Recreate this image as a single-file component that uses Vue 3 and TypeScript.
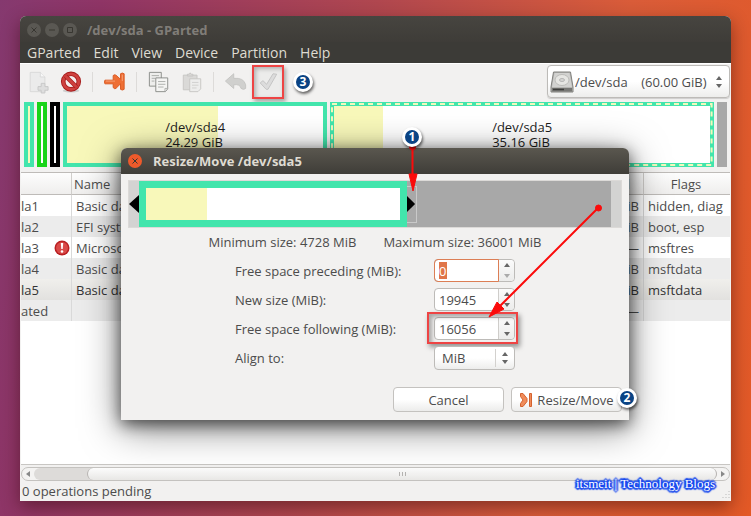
<script setup lang="ts">
import { ref } from 'vue'

interface PartitionRow {
  name: string
  label: string
  size: string
  flags: string
  warning?: boolean
  selected?: boolean
  shaded?: boolean
}

const menus: string[] = ['GParted', 'Edit', 'View', 'Device', 'Partition', 'Help']

const rows: PartitionRow[] = [
  { name: 'la1', label: 'Basic data', size: 'iB', flags: 'hidden, diag' },
  { name: 'la2', label: 'EFI system', size: 'iB', flags: 'boot, esp', shaded: true },
  { name: 'la3', label: 'Microsoft', size: '—', flags: 'msftres', warning: true },
  { name: 'la4', label: 'Basic data', size: 'iB', flags: 'msftdata', shaded: true },
  { name: 'la5', label: 'Basic data', size: 'iB', flags: 'msftdata', selected: true },
  { name: 'ated', label: '', size: '—', flags: '', shaded: true },
]

const preceding = ref('0')
const newSize = ref('19945')
const following = ref('16056')
</script>

<template>
  <div class="desktop">
    <main class="window">
      <header class="titlebar">
        <button class="winbtn" aria-label="Close">
          <svg viewBox="0 0 14 14"><path d="M4.5 4.5l5 5M9.5 4.5l-5 5" /></svg>
        </button>
        <button class="winbtn" aria-label="Minimize">
          <svg viewBox="0 0 14 14"><path d="M4 7h6" /></svg>
        </button>
        <button class="winbtn" aria-label="Maximize">
          <svg viewBox="0 0 14 14"><path d="M4.5 4.5h5v5h-5z" /></svg>
        </button>
        <h1>/dev/sda - GParted</h1>
      </header>
      <nav class="menubar">
        <button v-for="m in menus" :key="m">{{ m }}</button>
      </nav>

      <div class="toolbar">
        <button class="tool" aria-label="New">
          <svg viewBox="0 0 24 24" fill="#ebebeb" stroke="#d8d8d8">
            <path d="M3.5 1.5h11l5 5v16h-16z" />
            <path d="M14.5 1.5v5h5" fill="#f8f8f8" />
            <path d="M15.5 13.5h4v3.5h3.5v4h-3.5v3h-4v-3h-3.500v-4h3.500z" fill="#dedede" stroke="#c6c6c6" />
          </svg>
        </button>
        <button class="tool" aria-label="Delete">
          <svg viewBox="0 0 24 24" fill="none">
            <ellipse cx="12" cy="21.5" rx="9" ry="2" fill="#cfcfcf" />
            <circle cx="12" cy="11.5" r="8.5" fill="#f5eeee" stroke="#a61d1d" stroke-width="5" />
            <circle cx="12" cy="11.5" r="8.5" stroke="#cf413f" stroke-width="3" />
            <path d="M6 5.5l12 12" stroke="#a61d1d" stroke-width="4.500" />
            <path d="M6 5.5l12 12" stroke="#cf413f" stroke-width="3" />
          </svg>
        </button>
        <span class="sep"></span>
        <button class="tool" aria-label="Resize/Move">
          <svg viewBox="0 0 24 24" stroke="#d9571f" stroke-linejoin="round">
            <path d="M1 10q-1 2 0 4h9v4q1.500 2 3 1l5-5v6q2 1.500 4 0v-17q-2-1.500-4 0v6l-5-4.500q-2-1-3 .5v5z" fill="#ee6f35" />
            <path d="M2 11h10M20 4v7" stroke="#f6a27a" fill="none" />
          </svg>
        </button>
        <span class="sep"></span>
        <button class="tool" aria-label="Copy">
          <svg viewBox="0 0 24 24" fill="#eeeeec" stroke="#888a85">
            <path d="M1.500 1.500h13v15h-13z" />
            <path d="M4 5h8M4 8h4M4 11h3" stroke="#aaaca8" />
            <path d="M8.500 7.500h13v12l-2.500 3h-10.500z" fill="#f5f5f3" />
            <path d="M11 11.500h8M11 14.500h8M11 17.500h6M18.500 22v-3h3" stroke="#aaaca8" fill="none" />
          </svg>
        </button>
        <button class="tool" aria-label="Paste">
          <svg viewBox="0 0 24 24" fill="#dad9d7" stroke="#c6c5c3">
            <path d="M2.500 4.500h15v16h-15z" />
            <path d="M7 5.500v-2h2q1-3 2 0h2v2z" />
            <path d="M9.500 8.500h12v11l-3 3h-9z" fill="#ededec" />
            <path d="M12 12.500h7M12 15.500h7M12 18.500h5" stroke="#cfcfce" />
          </svg>
        </button>
        <span class="sep"></span>
        <button class="tool" aria-label="Undo">
          <svg viewBox="0 0 24 24" fill="#d0d0ce" stroke="#c4c4c2" stroke-linejoin="round">
            <path d="M.5 11l9-8v5q11-1 13 7v4q-2 2-5 0-1-5-8-4v4z" />
          </svg>
        </button>
        <button class="tool apply" aria-label="Apply">
          <svg viewBox="0 0 24 24" fill="#dcdcdc" stroke="#c2c2c2" stroke-linejoin="round">
            <path d="M3.500 13l3-2.500 4 4 7-11.500 4 .500-9.500 16.500h-2z" />
          </svg>
        </button>
        <span class="badge">3</span>
        <div class="device">
          <svg class="disk" viewBox="0 0 24 24">
            <path d="M3.500 2h17L23 17v5H1v-5z" fill="#b5b5b2" stroke="#80807d" />
            <path d="M4.500 3h15l2.500 14H2z" fill="#d2d2d0" />
            <ellipse cx="12" cy="10" rx="7" ry="5.500" fill="#e6e6e3" stroke="#bcbcb9" />
            <ellipse cx="12" cy="10" rx="2.500" ry="1.500" fill="#d6d6d3" stroke="#b5b5b5" />
            <path d="M2 18h20v3.500H2z" fill="#777774" />
            <path d="M3 19.500h11" stroke="#3d3d3b" stroke-width="1.500" />
          </svg>
          <select aria-label="Device">
            <option>/dev/sda&nbsp;&nbsp;&nbsp; (60.00 GiB)</option>
          </select>
          <svg class="updown" viewBox="0 0 8 14"><path d="M1 5l3-4 3 4zM1 9l3 4 3-4z" /></svg>
        </div>
      </div>

      <section class="graph">
        <div class="part tiny teal"></div>
        <div class="part tiny green"></div>
        <div class="part tiny black"></div>
        <div class="part sda4"><p>/dev/sda4<br />24.29 GiB</p></div>
        <div class="part sda5">
          <svg><rect /></svg>
          <p>/dev/sda5<br />35.16 GiB</p>
        </div>
        <div class="part rest"></div>
      </section>

      <section class="list">
        <table>
          <colgroup>
            <col class="c-part" /><col class="c-name" /><col /><col class="c-flags" />
          </colgroup>
          <thead>
            <tr><th></th><th class="left">Name</th><th class="right">d</th><th>Flags</th></tr>
          </thead>
          <tbody>
            <tr v-for="r in rows" :key="r.name" :class="{ shaded: r.shaded, selected: r.selected }">
              <td class="first">
                <div>
                  {{ r.name }}
                  <svg v-if="r.warning" viewBox="0 0 16 16">
                    <circle cx="8" cy="8" r="7.500" fill="#b91f22" />
                    <circle cx="8" cy="8" r="6" fill="#d94a48" />
                    <path d="M6.800 3h2.400l-.5 6H7.300z" fill="#fff" />
                    <circle cx="8" cy="11.500" r="1.300" fill="#fff" />
                  </svg>
                </div>
              </td>
              <td>{{ r.label }}</td>
              <td class="right">{{ r.size }}</td>
              <td>{{ r.flags }}</td>
            </tr>
          </tbody>
        </table>
      </section>

      <div class="scroll">
        <button aria-label="Scroll left"><svg viewBox="0 0 6 6"><path d="M5 0v6L1 3z" /></svg></button>
        <div class="rail"><div class="thumb"><i></i><i></i><i></i></div></div>
        <button aria-label="Scroll right"><svg viewBox="0 0 6 6"><path d="M1 0v6l4-3z" /></svg></button>
      </div>
      <footer class="status">
        <span>0 operations pending</span>
        <span class="watermark">itsmeit | Technology Blogs</span>
        <svg class="resize-corner" viewBox="0 0 10 10"><path d="M9 1v8M6 4v5M3 7v2" /></svg>
      </footer>

      <div class="dialog" role="dialog" aria-labelledby="dlg-title">
        <header>
          <button class="winbtn close" aria-label="Close dialog">
            <svg viewBox="0 0 14 14"><path d="M4.500 4.500l5 5M9.500 4.500l-5 5" /></svg>
          </button>
          <h2 id="dlg-title">Resize/Move /dev/sda5</h2>
        </header>
        <div class="body">
          <div class="resizer">
            <div class="edge"><svg viewBox="0 0 10 18"><path d="M10 0v18L0 9z" /></svg></div>
            <div class="block"></div>
            <div class="free">
              <div class="grip"><svg viewBox="0 0 10 18"><path d="M0 0v18l9-9z" /></svg></div>
            </div>
            <div class="edge"></div>
          </div>
          <div class="limits">
            <span>Minimum size: 4728 MiB</span><span>Maximum size: 36001 MiB</span>
          </div>
          <div class="form">
            <label for="pre">Free space preceding (MiB):</label>
            <div class="spin focus">
              <div class="entry"><input id="pre" v-model="preceding" class="marked" /></div>
              <div class="steps">
                <button aria-label="Increase preceding"><svg viewBox="0 0 6 4"><path d="M0 4l3-4 3 4z" /></svg></button>
                <button aria-label="Decrease preceding" class="off"><svg viewBox="0 0 6 4"><path d="M0 0l3 4 3-4z" /></svg></button>
              </div>
            </div>
            <label for="size">New size (MiB):</label>
            <div class="spin">
              <div class="entry"><input id="size" v-model="newSize" /></div>
              <div class="steps">
                <button aria-label="Increase size"><svg viewBox="0 0 6 4"><path d="M0 4l3-4 3 4z" /></svg></button>
                <button aria-label="Decrease size"><svg viewBox="0 0 6 4"><path d="M0 0l3 4 3-4z" /></svg></button>
              </div>
            </div>
            <label for="post">Free space following (MiB):</label>
            <div class="spin outlined">
              <div class="entry"><input id="post" v-model="following" /></div>
              <div class="steps">
                <button aria-label="Increase following"><svg viewBox="0 0 6 4"><path d="M0 4l3-4 3 4z" /></svg></button>
                <button aria-label="Decrease following"><svg viewBox="0 0 6 4"><path d="M0 0l3 4 3-4z" /></svg></button>
              </div>
            </div>
            <label for="align">Align to:</label>
            <div class="align">
              <select id="align"><option>MiB</option></select>
              <svg class="updown" viewBox="0 0 8 14"><path d="M1 5l3-4 3 4zM1 9l3 4 3-4z" /></svg>
            </div>
          </div>
          <div class="actions">
            <button class="btn">Cancel</button>
            <button class="btn">
              <svg viewBox="0 0 14 16" stroke="#d4622f" fill="#f08c5a">
                <path d="M1.500 1.500h2.500l4 5v3l-4 5h-2.500v-3l2.500-3.500-2.500-3.500z" />
                <path d="M10.500 1.500h2v13h-2z" />
              </svg>
              Resize/Move
              <span class="badge on-button">2</span>
            </button>
          </div>
        </div>
        <svg class="arrows">
          <path d="M291.500 -1V30M477 60L378 159" />
          <circle cx="291.500" cy="-1" r="3" />
          <circle cx="477.500" cy="60" r="3" />
          <path class="head" d="M288 26h8l-4 17zM368 169l8 -15 7 7z" />
        </svg>
        <span class="badge on-title">1</span>
      </div>
    </main>
  </div>
</template>

<style>
body {
  margin: 0;
}
</style>

<style scoped>
* {
  box-sizing: border-box;
}
.desktop {
  min-height: 100vh;
  padding: 16px 20px 15px;
  display: flex;
  font: 13px/16px "Open Sans", "Noto Sans", sans-serif;
  color: #4c4c4c;
  background: linear-gradient(100deg, #85396f 0%, #8f3566 12%, #b0474f 45%, #d95c39 75%, #e35926 100%);
}
button,
select,
input {
  font: inherit;
  color: inherit;
  margin: 0;
  padding: 0;
  border: 0;
  background: none;
}
svg {
  display: block;
}
h1,
h2,
p {
  margin: 0;
  font-size: 13px;
}
.window {
  position: relative;
  flex: 1;
  min-width: 0;
  display: flex;
  flex-direction: column;
  background: #f2f1f0;
  border-radius: 6px 6px 0 0;
  box-shadow: 0 6px 18px rgba(40, 0, 0, 0.45);
}
.titlebar {
  height: 26px;
  padding: 2px 7px 0;
  display: flex;
  align-items: center;
  gap: 4px;
  background: linear-gradient(#474540, #3e3c38);
  border-radius: 6px 6px 0 0;
  color: #807d78;
}
.titlebar h1 {
  margin-left: 6px;
}
.winbtn {
  width: 14px;
  height: 14px;
  border-radius: 50%;
  background: #5a5853;
}
.winbtn svg {
  width: 14px;
  height: 14px;
  fill: none;
  stroke: #383631;
}
.menubar {
  height: 21px;
  padding: 0 7px;
  display: flex;
  align-items: center;
  gap: 13px;
  background: #3c3b37;
  color: #dfdbd2;
  font-size: 14px;
}
.toolbar {
  height: 36px;
  padding: 1px 1px 1px 6px;
  display: flex;
  align-items: center;
  border-top: 1px solid #fff;
}
.tool {
  width: 33px;
  height: 34px;
  display: flex;
  flex: none;
  align-items: center;
  padding-left: 1px;
}
.tool svg {
  width: 22px;
  height: 24px;
}
.sep {
  width: 1px;
  height: 20px;
  margin-right: 10px;
  background: #dddbd9;
}
.toolbar .apply {
  width: 32px;
  justify-content: center;
  margin-left: -5px;
  padding: 0;
  border: 2px solid #ee4444;
  background: #ececeb;
  box-shadow: 2px 3px 4px rgba(0, 0, 0, 0.3), inset 2px 2px 4px rgba(0, 0, 0, 0.25);
}
.badge {
  width: 20px;
  height: 20px;
  margin-left: 9px;
  flex: none;
  border: 3px solid #fff;
  border-radius: 50%;
  background: #0a4384;
  color: #fff;
  font-weight: 700;
  font-size: 12px;
  line-height: 14px;
  text-align: center;
  box-shadow: 1px 2px 3px rgba(0, 0, 0, 0.6);
}
.device,
.align {
  position: relative;
  display: flex;
  align-items: center;
  background: linear-gradient(#fff 50%, #ededec);
  border: 1px solid #bdbbb8;
  border-radius: 4px;
}
.device {
  width: 183px;
  height: 33px;
  margin-left: auto;
  box-shadow: 0 1px 1px rgba(0, 0, 0, 0.15);
}
.device select {
  flex: 1;
  min-width: 0;
  appearance: none;
}
.disk {
  width: 24px;
  height: 24px;
  margin: 0 1px 0 2px;
}
.updown {
  width: 8px;
  height: 14px;
  fill: #666;
  margin-right: 6px;
}
.graph {
  display: grid;
  grid-template-columns: 10px 10px 10px 264fr 383fr 10px;
  height: 65px;
  margin: 3px 4px 5px;
  gap: 3px;
  color: #1c1c1c;
}
.part {
  min-width: 0;
  border: 4px solid #42e5ac;
  background: #fff;
  display: flex;
  align-items: center;
  justify-content: center;
  line-height: 15px;
}
.part p {
  padding-top: 1px;
}
.tiny {
  background: #f8f8ba;
}
.green {
  border-color: #19d419;
  background: #fff;
}
.black {
  border-color: #000;
  background: #fff;
}
.sda4 {
  background: linear-gradient(90deg, #f8f8ba 59%, #fff 59%);
}
.sda5 {
  position: relative;
  background: linear-gradient(90deg, #f8f8ba 13%, #fff 13%);
}
.sda5 svg {
  position: absolute;
  inset: -4px;
  width: calc(100% + 8px);
  height: calc(100% + 8px);
}
.sda5 rect {
  x: 2px;
  y: 2px;
  width: calc(100% - 4px);
  height: calc(100% - 4px);
  fill: none;
  stroke: #f3f8bd;
  stroke-width: 2px;
  stroke-dasharray: 5 4;
}
.rest {
  border-color: #a8a8a8;
  background: #a8a8a8;
}
.list {
  flex: 1;
  margin: 0 1px;
  background: #fff;
  border-top: 1px solid #bebbb8;
  border-bottom: 1px solid #c8c6c3;
}
table {
  width: 100%;
  table-layout: fixed;
  border-collapse: separate;
  border-spacing: 0;
}
.c-part {
  width: 51px;
}
.c-name {
  width: 300px;
}
.c-flags {
  width: 86px;
}
th {
  height: 22px;
  padding: 0 4px 0 2px;
  font-weight: 400;
  border-right: 1px solid #d0cecb;
  border-bottom: 1px solid #bebbb8;
  background: linear-gradient(#fdfdfd, #efeeed);
}
td {
  height: 21px;
  padding: 0 4px;
  border-right: 1px solid #d9d9d9;
  white-space: nowrap;
}
th:last-child,
td:last-child {
  border-right: 0;
}
th.left {
  text-align: left;
}
th.right {
  text-align: right;
  padding-right: 13px;
}
td.right {
  text-align: right;
}
td.first {
  padding: 0 1px 0 0;
}
.first div {
  display: flex;
  justify-content: space-between;
  align-items: center;
}
.first svg {
  width: 16px;
  height: 16px;
}
.shaded td {
  background: #ececec;
}
.selected td {
  background: linear-gradient(#f0efec, #e2e1df);
  color: #333;
}
.scroll {
  display: flex;
  height: 14px;
  margin: 2px 1px 0;
  border: 1px solid #c4c2bf;
  border-radius: 7px;
  background: #f4f3f2;
}
.scroll > button {
  width: 12px;
  display: flex;
  align-items: center;
  justify-content: center;
}
.scroll svg {
  width: 6px;
  height: 6px;
  fill: #888;
}
.rail {
  flex: 1;
  background: #dddbd9;
  border-radius: 6px;
  padding-left: 53px;
}
.thumb {
  height: 12px;
  display: flex;
  align-items: center;
  justify-content: center;
  gap: 2px;
  border: solid #b8b5b2;
  border-width: 0 1px;
  border-radius: 6px;
  background: linear-gradient(#fcfcfc, #e8e7e5);
}
.thumb i {
  width: 1px;
  height: 4px;
  background: #b4b2b0;
}
.status {
  display: flex;
  align-items: center;
  height: 20px;
  padding: 0 1px 1px 2px;
}
.watermark {
  font: 13px/14px "Liberation Serif", serif;
  color: #fff;
  margin-left: auto;
  padding-bottom: 14px;
  text-shadow: 0 0 2px #1748ee, 2px 0 1px #1748ee, -2px 0 1px #1748ee, 0 2px 1px #1748ee, 0 -2px 1px #1748ee,
    1px 1px 1px #1748ee, -1px -1px 1px #1748ee, 1px -1px 1px #1748ee, -1px 1px 1px #1748ee, 0 0 3px #1748ee;
}
.resize-corner {
  width: 10px;
  height: 10px;
  margin: 8px 0 0 5px;
  fill: none;
  stroke: #bbb;
  stroke-dasharray: 1 2;
}
.dialog {
  position: absolute;
  top: 132px;
  left: 101px;
  right: 102px;
  border-radius: 6px 6px 0 0;
  background: #f2f1f0;
  box-shadow: 0 8px 38px rgba(0, 0, 0, 0.5), 0 4px 16px rgba(0, 0, 0, 0.6);
}
.dialog header {
  height: 26px;
  padding: 0 7px;
  display: flex;
  align-items: center;
  gap: 11px;
  border-radius: 6px 6px 0 0;
  background: linear-gradient(#5a574f, #3f3d38);
  color: #dfdbd2;
}
.close {
  background: #ee5a2b;
}
.body {
  padding: 6px 7px 8px;
}
.resizer {
  display: grid;
  grid-template-columns: 10px 268fr 204fr 10px;
  height: 48px;
  border: 1px solid #dcdad8;
}
.resizer .edge {
  display: flex;
  align-items: center;
  background: #d3d3d2;
}
.resizer svg {
  width: 10px;
  height: 18px;
}
.block {
  border: 7px solid #42e5ac;
  background: linear-gradient(90deg, #f8f8ba 24%, #fff 24%);
}
.free {
  display: flex;
  align-items: center;
  background: #a8a8a8;
}
.grip {
  width: 10px;
  height: 37px;
  display: flex;
  align-items: center;
  border: 1px solid #c9c9c9;
  border-left: 0;
}
.limits {
  display: flex;
  justify-content: center;
  gap: 27px;
  padding: 6px 0 9px;
}
.form {
  display: grid;
  grid-template-columns: 199px 81px;
  row-gap: 6px;
  align-items: center;
  padding-left: 107px;
}
.spin {
  position: relative;
  display: flex;
  height: 23px;
  border: 1px solid #bdbbb8;
  border-radius: 4px;
  background: #fff;
}
.entry {
  flex: 1;
  min-width: 0;
  padding: 2px 4px;
  border-right: 1px solid #cfcdca;
}
.entry input {
  width: 100%;
  height: 17px;
  display: block;
}
.entry input.marked {
  width: 8px;
  background: #e0764a;
  color: #fff;
}
.focus .entry {
  margin: -1px 0 -1px -1px;
  padding: 2px 4px;
  border: 1px solid #dc7e55;
  border-radius: 4px 0 0 4px;
}
.steps {
  width: 15px;
  display: flex;
  flex-direction: column;
  background: linear-gradient(#fbfbfb, #ececeb);
  border-radius: 0 4px 4px 0;
}
.steps button {
  flex: 1;
  display: flex;
  align-items: center;
  justify-content: center;
}
.steps svg {
  width: 6px;
  height: 4px;
  fill: #666;
}
.steps .off svg {
  fill: #aaa;
}
.outlined::after {
  content: "";
  position: absolute;
  inset: -6px -4px -5px -8px;
  border: 2px solid #ee4444;
  box-shadow: 2px 3px 5px rgba(0, 0, 0, 0.4), inset 3px 3px 4px rgba(0, 0, 0, 0.3);
  pointer-events: none;
}
.align {
  height: 24px;
}
.align select {
  flex: 1;
  min-width: 0;
  height: 18px;
  padding-left: 7px;
  margin-right: 5px;
  appearance: none;
  border-right: 1px solid #d3d1ce;
}
.align .updown {
  margin-right: 5px;
}
.actions {
  display: flex;
  justify-content: flex-end;
  gap: 7px;
  padding: 17px 0 0;
}
.btn {
  position: relative;
  width: 111px;
  height: 25px;
  display: flex;
  align-items: center;
  justify-content: center;
  gap: 4px;
  border: 1px solid #c4c2bf;
  border-radius: 4px;
  background: linear-gradient(#fff 50%, #ececeb);
}
.btn svg {
  width: 14px;
  height: 16px;
  flex: none;
}
.badge.on-button {
  position: absolute;
  right: -16px;
  top: 0;
}
.badge.on-title {
  position: absolute;
  left: 281px;
  top: -21px;
  margin: 0;
}
.arrows {
  position: absolute;
  inset: 0;
  width: 100%;
  height: 100%;
  overflow: visible;
  pointer-events: none;
  fill: #fb0b0b;
  stroke: #fb0b0b;
  stroke-width: 2px;
}
.arrows .head,
.arrows circle {
  stroke-width: 1px;
}
</style>
